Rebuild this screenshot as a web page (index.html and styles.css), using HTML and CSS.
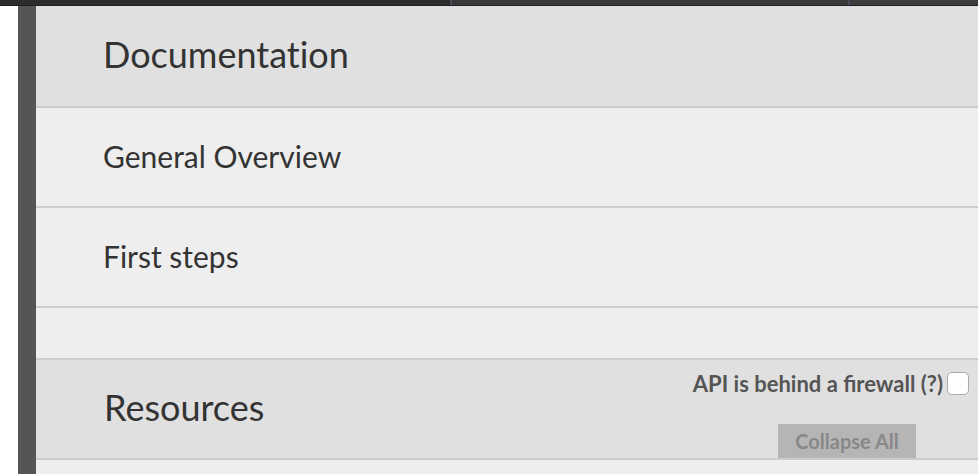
FILE: index.html
```html
<!DOCTYPE html>
<html>
<head>
<meta charset="utf-8">
<link rel="stylesheet" href="styles.css">
</head>
<body>
<div class="topbar">
  <div class="seg seg-a"></div>
  <div class="seg seg-b"></div>
  <div class="seg seg-c"></div>
</div>
<div class="main">
  <div class="gutter"></div>
  <div class="rail"></div>
  <div class="content">
    <div class="header doc-header"><h2 class="title">Documentation</h2></div>
    <div class="row"><span class="link">General Overview</span></div>
    <div class="row"><span class="link">First steps</span></div>
    <div class="row row-empty"></div>
    <div class="header res-header">
      <h2 class="title">Resources</h2>
      <div class="controls">
        <label class="firewall">API is behind a firewall (?)<span class="check"></span></label>
        <button class="collapse">Collapse All</button>
      </div>
    </div>
    <div class="row row-tail"></div>
  </div>
</div>
</body>
</html>
```
FILE: styles.css
```css
html, body {
  margin: 0;
  padding: 0;
  height: 100%;
  overflow: hidden;
  background: #ffffff;
  font-family: Lato, "Open Sans", sans-serif;
}
.topbar {
  display: flex;
  height: 5px;
  border-bottom: 1px solid #1f1f1f;
}
.seg { height: 100%; }
.seg-a { width: 450px; background: #2c2c2e; }
.seg-b { width: 396px; background: #393939; border-left: 2px solid #4a4a5c; }
.seg-c { flex: 1; background: #3c3c3c; border-left: 2px solid #4a4a5c; }
.main {
  display: flex;
  height: calc(100% - 6px);
}
.gutter { width: 18px; background: #ffffff; }
.rail { width: 18px; background: #555557; }
.content {
  flex: 1;
  display: flex;
  flex-direction: column;
  background: #eeeeee;
}
.header {
  background: #e0e0e0;
  border-bottom: 2px solid #cccccc;
  display: flex;
  align-items: center;
  padding-left: 67px;
  box-sizing: border-box;
}
.doc-header { height: 102px; }
.doc-header .title { margin-top: -4px; }
.res-header { height: 100px; padding-left: 68px; }
.title {
  margin: 0;
  font-weight: 400;
  font-size: 36px;
  color: #333333;
  font-variant-ligatures: none;
}
.res-header .title { margin-top: -5px; }
.row {
  height: 100px;
  border-bottom: 2px solid #cccccc;
  box-sizing: border-box;
  display: flex;
  align-items: center;
  padding-left: 67px;
}
.row-empty { height: 52px; }
.row-tail { border-bottom: none; flex: 1; }
.link {
  font-size: 30px;
  color: #333333;
  margin-top: -2px;
  font-variant-ligatures: none;
}
.controls {
  margin-left: auto;
  align-self: stretch;
  display: flex;
  flex-direction: column;
  align-items: flex-end;
  justify-content: space-between;
  padding-top: 10px;
}
.firewall {
  display: flex;
  align-items: center;
  font-weight: 700;
  font-size: 22px;
  line-height: 27px;
  color: #555555;
  margin-right: 9px;
  gap: 4px;
}
.check {
  width: 20px;
  height: 21px;
  background: #ffffff;
  border: 1px solid #aaaaaa;
  border-radius: 5px;
  display: inline-block;
}
.collapse {
  width: 138px;
  height: 34px;
  margin-right: 62px;
  border: none;
  background: #b5b5b5;
  color: #888888;
  font-family: Lato, sans-serif;
  font-weight: 700;
  font-size: 20px;
  padding: 0;
}
```
